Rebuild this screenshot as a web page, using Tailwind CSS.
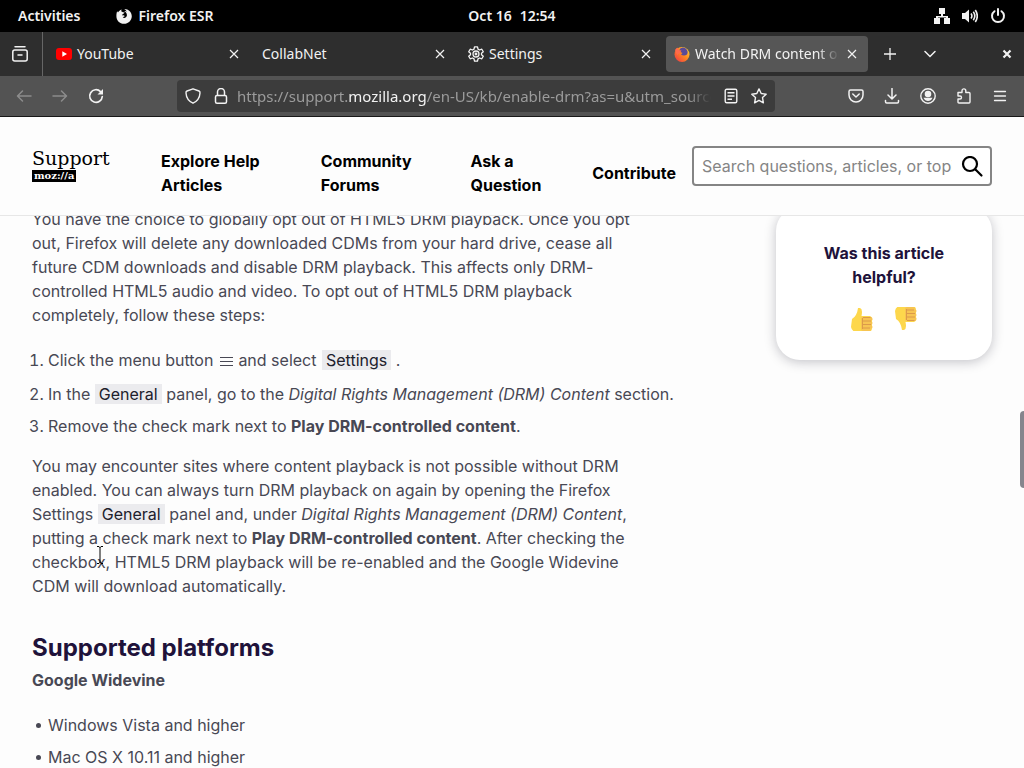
<!DOCTYPE html>
<html lang="en">

<head>
  <meta charset="UTF-8" />
  <meta name="viewport" content="width=device-width, initial-scale=1.0" />
  <title>Watch DRM content on Firefox</title>
  <script src="https://cdn.jsdelivr.net/npm/@tailwindcss/browser@4"></script>
</head>

<body class="h-screen flex flex-col overflow-hidden bg-[#fdfdfd] font-['Noto_Sans',sans-serif] text-[15px]">

  <!-- Desktop bar -->
  <div class="h-8 shrink-0 bg-black text-[#f2f2f2] text-sm font-semibold grid grid-cols-3 items-center px-[18px]">
    <div class="flex items-center gap-9">
      <button>Activities</button>
      <button class="flex items-center gap-1.5">
        <svg class="size-4" viewBox="0 0 16 16" fill="currentColor"><path d="M1.2 3.2 2 4.5C2.8 3 4 2 5.600 1.400L5.200 3.300 7 4.200 8.700 4.500 7.200 5.900 6.300 6.500 6 7.600C7.200 7.100 8.200 7.200 8.900 8.200 8 8 7.600 9.300 6.600 9.300 8 10.500 10.500 9.800 10.900 7.500 11.100 5.500 9.700 3.700 8.400 3.200 9.300 3 10.200 3.200 10.900 3.700 10.300 2.600 9.500 1.800 8.300 1 12 .8 15.700 3.700 15.800 8.200 15.700 12.600 12.200 15.800 8 15.800 3.700 15.700.400 12.500.400 8.200.400 6.200.600 4.600 1.200 3.200z"/></svg>
        Firefox ESR
      </button>
    </div>
    <button class="justify-self-center flex gap-2"><span>Oct 16</span><span>12:54</span></button>
    <button class="justify-self-end flex items-center gap-3" aria-label="System menu">
      <svg class="size-4" viewBox="0 0 16 16" fill="currentColor"><path d="M5 0h6v6H9v2h5v2h2v6h-6v-6h2v-.500H4v.500h2v6H0v-6h2V8h5V6H5z"/></svg>
      <svg class="size-4" viewBox="0 0 16 16" fill="none" stroke="currentColor" stroke-width="1.600"><path d="M0 5h3l4-3.500v13L3 11H0z" fill="currentColor" stroke="none"/><path d="M9 5.500q1.800 2.500 0 5M11.300 3.800q3 4.200 0 8.400M13.300 2q4 6 0 12"/></svg>
      <svg class="size-4" viewBox="0 0 16 16" fill="none" stroke="currentColor" stroke-width="2" stroke-linecap="round"><path d="M8 1v6M4.500 3.200a6 6 0 1 0 7 0"/></svg>
    </button>
  </div>

  <!-- Tab strip -->
  <div class="h-11 shrink-0 bg-[#2e2e2e] text-[#f2f2f2] text-sm flex items-center">
    <button class="w-[43px] h-full border-r border-[#666] flex items-center justify-center pr-0.5" aria-label="Firefox View">
      <svg class="size-4" viewBox="0 0 16 16" fill="none" stroke="currentColor" stroke-width="1.500" stroke-linecap="round"><path d="M3 .8h10M6 9h4"/><rect x=".8" y="4" width="14.400" height="11" rx="2"/></svg>
    </button>
    <div class="flex gap-1 pl-[5px]">
      <div class="w-[202px] h-9 rounded flex items-center gap-[5px] px-2">
        <svg class="size-4" viewBox="0 0 16 16"><rect y="2" width="16" height="12" rx="3" fill="#f00"/><path d="M6.300 5.300v5.400L11 8z" fill="#fff"/></svg>
        <span class="flex-1">YouTube</span>
        <button class="size-4 flex items-center justify-center" aria-label="Close tab"><svg class="size-2.5" viewBox="0 0 10 10" stroke="currentColor" stroke-width="1.200"><path d="m1 1 8 8M9 1 1 9"/></svg></button>
      </div>
      <div class="w-[202px] h-9 rounded flex items-center gap-[5px] px-2">
        <span class="flex-1">CollabNet</span>
        <button class="size-4 flex items-center justify-center" aria-label="Close tab"><svg class="size-2.5" viewBox="0 0 10 10" stroke="currentColor" stroke-width="1.200"><path d="m1 1 8 8M9 1 1 9"/></svg></button>
      </div>
      <div class="w-[202px] h-9 rounded flex items-center gap-[5px] px-2">
        <svg class="size-4" viewBox="0 0 16 16" fill="none" stroke="currentColor" stroke-width="1.300" stroke-linejoin="round"><path d="M6.500.8h3l.5 2.300 1.500.900 2.300-.800 1.500 2.600L13.500 7.300v1.400l1.800 1.500-1.500 2.600-2.300-.800-1.500.900-.500 2.300h-3L6 12.900 4.500 12l-2.300.800-1.500-2.600 1.800-1.500V7.300L.7 5.800l1.500-2.600L4.500 4 6 3.100z"/><circle cx="8" cy="8" r="3"/><circle cx="8" cy="8" r=".8"/></svg>
        <span class="flex-1">Settings</span>
        <button class="size-4 flex items-center justify-center" aria-label="Close tab"><svg class="size-2.5" viewBox="0 0 10 10" stroke="currentColor" stroke-width="1.200"><path d="m1 1 8 8M9 1 1 9"/></svg></button>
      </div>
      <div class="w-[202px] h-9 rounded bg-[#565656] flex items-center gap-[5px] px-2">
        <svg class="size-4 shrink-0" viewBox="0 0 16 16">
          <defs><linearGradient id="fox" x1="1" y1="0" x2="0" y2="1"><stop stop-color="#ffe040"/><stop offset=".45" stop-color="#ff8a20"/><stop offset="1" stop-color="#f0304a"/></linearGradient></defs>
          <circle cx="8" cy="8.500" r="7.500" fill="url(#fox)"/><path d="M5 4.500Q7 0 11 2q4 3 2 6.500-3 2-6 0l1.500-1.500-2-1z" fill="#5a4a98"/><path d="M1 4q2-3 3-2l.5 2 3 .5L6 7 3 9z" fill="#ff6a4c"/>
        </svg>
        <span class="flex-1 whitespace-nowrap overflow-hidden mask-r-from-85%">Watch DRM content on Firefox</span>
        <button class="size-4 flex items-center justify-center shrink-0" aria-label="Close tab"><svg class="size-2.5" viewBox="0 0 10 10" stroke="currentColor" stroke-width="1.200"><path d="m1 1 8 8M9 1 1 9"/></svg></button>
      </div>
    </div>
    <div class="flex-1 flex items-center gap-7 pl-4 pr-3">
      <button aria-label="New tab"><svg class="size-3" viewBox="0 0 12 12" stroke="currentColor" stroke-width="1.300"><path d="M6 0v12M0 6h12"/></svg></button>
      <button aria-label="List all tabs"><svg class="size-3" viewBox="0 0 12 12" fill="none" stroke="currentColor" stroke-width="1.500" stroke-linecap="round"><path d="m1 3.500 5 5 5-5"/></svg></button>
      <button class="ml-auto" aria-label="Close window"><svg class="size-2.5" viewBox="0 0 10 10" stroke="currentColor" stroke-width="2.200"><path d="m1.500 1.500 7 7M8.500 1.500l-7 7"/></svg></button>
    </div>
  </div>

  <!-- Navigation toolbar -->
  <div class="h-[41px] shrink-0 bg-[#535353] border-b border-[#181818] text-[#f2f2f2] flex items-center pl-4 pr-4">
    <div class="flex items-center gap-5 w-[161px]">
      <button class="text-[#8c8c8c]" aria-label="Back"><svg class="size-4" viewBox="0 0 16 16" fill="none" stroke="currentColor" stroke-width="1.500" stroke-linecap="round" stroke-linejoin="round"><path d="M6.500 3 1.500 8l5 5M2 8h13"/></svg></button>
      <button class="text-[#8c8c8c]" aria-label="Forward"><svg class="size-4" viewBox="0 0 16 16" fill="none" stroke="currentColor" stroke-width="1.500" stroke-linecap="round" stroke-linejoin="round"><path d="m9.500 3 5 5-5 5M14 8H1"/></svg></button>
      <button aria-label="Reload"><svg class="size-4" viewBox="0 0 16 16" fill="none" stroke="currentColor" stroke-width="1.700" stroke-linecap="round"><path d="M12.500 3.600A6.300 6.300 0 1 0 14.300 8.500"/><path d="M15 1v5.500H9.500z" fill="currentColor" stroke="none"/></svg></button>
    </div>
    <div class="flex-1 h-8 rounded bg-[#3c3c3c] flex items-center gap-3 px-2">
      <svg class="size-4 shrink-0" viewBox="0 0 16 16" fill="none" stroke="currentColor" stroke-width="1.400" stroke-linejoin="round"><path d="m8 .8 6 2.200q1.200.5 1 2-.4 7.200-7 10.200Q1.400 12.200 1 5q-.2-1.500 1-2z"/></svg>
      <svg class="size-4 shrink-0" viewBox="0 0 16 16" fill="none" stroke="currentColor" stroke-width="1.500"><rect x="2.500" y="7.500" width="11" height="7.700" rx="1.500"/><path d="M4.500 7.500V4a3.500 3.500 0 0 1 7 0v3.500"/></svg>
      <div class="flex-1 w-0 overflow-hidden whitespace-nowrap text-[#9b9b9b] -ml-1 mask-r-from-95%">https://support.<span class="text-[#f2f2f2]">mozilla.org</span>/en-US/kb/enable-drm?as=u&amp;utm_source=inproduct</div>
      <button aria-label="Reader view"><svg class="size-4" viewBox="0 0 16 16" fill="none" stroke="currentColor" stroke-width="1.400"><rect x="2.200" y="1.200" width="11.600" height="13.600" rx="1.500"/><path d="M4.500 4.800h7M4.500 8h7M4.500 11.200H9"/></svg></button>
      <button aria-label="Bookmark"><svg class="size-4" viewBox="0 0 16 16" fill="none" stroke="currentColor" stroke-width="1.400" stroke-linejoin="round"><path d="m8 .9 2.200 4.600 5 .7-3.700 3.400.9 5.200L8 12.300l-4.400 2.500.9-5.200L.8 6.200l5-.7z"/></svg></button>
    </div>
    <div class="flex items-center gap-5 pl-[73px]">
      <button aria-label="Pocket"><svg class="size-4" viewBox="0 0 16 16" fill="none" stroke="currentColor" stroke-width="1.500" stroke-linecap="round" stroke-linejoin="round"><path d="M2.500 2h11q1.500 0 1.500 1.500V7A7 7 0 0 1 1 7V3.500Q1 2 2.500 2z"/><path d="m4.800 6 3.200 3 3.200-3"/></svg></button>
      <button aria-label="Downloads"><svg class="size-4" viewBox="0 0 16 16" fill="none" stroke="currentColor" stroke-width="1.500" stroke-linecap="round" stroke-linejoin="round"><path d="M8 .5v10M4 7l4 4 4-4M1.500 12.500v1.300q0 1.200 1.200 1.200h10.600q1.200 0 1.200-1.200v-1.300"/></svg></button>
      <button aria-label="Account"><svg class="size-4" viewBox="0 0 16 16" fill="none" stroke="currentColor" stroke-width="1.400"><circle cx="8" cy="8" r="7.200"/><circle cx="8" cy="6" r="2.600" fill="currentColor"/><path d="M3.500 9.800h9Q11 13 8 13t-4.500-3.200z" fill="currentColor" stroke="none"/></svg></button>
      <button aria-label="Extensions"><svg class="size-4" viewBox="0 0 16 16" fill="none" stroke="currentColor" stroke-width="1.400" stroke-linejoin="round"><path d="M2 4.500h4V2.800a1.900 1.900 0 0 1 3.800 0v1.700H13q1 0 1 1V14q0 1-1 1H3q-1 0-1-1v-3h2a1.500 1.500 0 0 0 0-3H2z"/></svg></button>
      <button aria-label="Menu"><svg class="size-4" viewBox="0 0 16 16" stroke="currentColor" stroke-width="1.300" stroke-linecap="round"><path d="M2.500 3.500h11M2.500 8h11M2.500 12.500h11"/></svg></button>
    </div>
  </div>

  <!-- Web page -->
  <div class="relative flex-1 min-h-0 overflow-hidden font-['Inter',sans-serif] text-base text-[#484854]">
    <header class="relative z-10 h-[99px] bg-[#fdfdfd] border-b border-[#e7e7e7] flex items-start px-8 pt-[29px]">
      <a href="#" class="w-[129px] shrink-0 text-black font-['DejaVu_Serif',serif]">
        <span class="block text-[19px] leading-6">Support</span>
        <span class="inline-block bg-black text-white text-[10px] leading-3 font-bold px-0.5 align-top">moz://a</span>
      </a>
      <nav class="flex-1 flex items-center justify-between pr-4 pt-[3px] font-bold text-black">
        <a href="#" class="w-[110px]">Explore Help Articles</a>
        <a href="#" class="w-[100px]">Community Forums</a>
        <a href="#" class="w-[72px]">Ask a Question</a>
        <a href="#">Contribute</a>
      </nav>
      <form class="w-[300px] h-10 border-2 border-[#858585] rounded flex items-center pl-2 pr-1.5 bg-white">
        <input type="text" aria-label="Search" placeholder="Search questions, articles, or topics" class="flex-1 min-w-0 outline-none placeholder:text-[#858585]">
        <button type="button" class="ml-2" aria-label="Submit search"><svg class="size-6" viewBox="0 0 24 24" fill="none" stroke="#000" stroke-width="2.200" stroke-linecap="round"><circle cx="10" cy="10" r="7"/><path d="m15.500 15.500 6 6"/></svg></button>
      </form>
    </header>

    <div class="-mt-[9px] flex items-start justify-between px-8">
      <main class="w-[648px]">
        <p class="max-w-[608px]">You have the choice to globally opt out of HTML5 DRM playback. Once you opt out, Firefox will delete any downloaded CDMs from your hard drive, cease all future CDM downloads and disable DRM playback. This affects only DRM-controlled HTML5 audio and video. To opt out of HTML5 DRM playback completely, follow these steps:</p>
        <ol class="mt-[21px] pl-4 list-decimal">
          <li class="pb-2.5">Click the menu button <svg class="inline size-4 align-[-3px]" viewBox="0 0 16 16" stroke="currentColor"><path d="M2 4.500h13M2 8.500h13M2 12.500h13"/></svg> and select <span class="bg-[#ebebee] text-[#20202c] px-1 ml-px">Settings</span> .</li>
          <li class="pb-2 whitespace-nowrap">In the <span class="bg-[#ebebee] text-[#20202c] px-1">General</span> panel, go to the <em>Digital Rights Management (DRM) Content</em> section.</li>
          <li>Remove the check mark next to <strong>Play DRM-controlled content</strong>.</li>
        </ol>
        <p class="mt-4 max-w-[608px]">You may encounter sites where content playback is not possible without DRM enabled. You can always turn DRM playback on again by opening the Firefox Settings <span class="bg-[#ebebee] text-[#20202c] px-1">General</span> panel and, under <em>Digital Rights Management (DRM) Content</em>, putting a check mark next to <strong>Play DRM-controlled content</strong>. After checking the checkbox, HTML5 DRM playback will be re-enabled and the Google Widevine CDM will download automatically.</p>
        <h2 class="mt-[34px] text-2xl font-bold text-[#20123a]">Supported platforms</h2>
        <h3 class="mt-1 font-bold">Google Widevine</h3>
        <ul class="mt-[21px] pl-4 list-none space-y-2">
          <li class="-ml-3 flex gap-[7px] items-center before:size-[5px] before:rounded-full before:bg-[#484854]">Windows Vista and higher</li>
          <li class="-ml-3 flex gap-[7px] items-center before:size-[5px] before:rounded-full before:bg-[#484854]">Mac OS X 10.11 and higher</li>
        </ul>
      </main>

      <aside class="w-[216px] h-[153px] rounded-3xl bg-white shadow-[0_2px_12px_rgba(20,20,40,0.25)] pt-[34px] px-10 text-center font-bold text-[#20123a]">
        <h3>Was this article helpful?</h3>
        <div class="mt-[18px] flex justify-center gap-5">
          <button aria-label="Helpful">
            <svg class="size-6" viewBox="0 0 24 24"><path d="M2 12q5-3 6-11h2q3 1 1.500 8H20q3 1 2 5v7q0 4-4 4H7q-5 0-6-5z" fill="#fdd74c"/><path d="M12.500 10h8q2 0 2 2t-2 2q2 0 2 2t-2 2q2 0 2 2t-2 1.500q1 2.500-1.500 2.500h-6q-2 0-2-2V12q0-2 1.500-2z" fill="#f7c452"/><path d="M13 10.500h7.500M13 14h8M13 17.500h8M13 21h7M12.500 11v11" fill="none" stroke="#dc9a4a"/></svg>
          </button>
          <button aria-label="Not helpful">
            <svg class="size-6 -scale-y-100" viewBox="0 0 24 24"><path d="M2 12q5-3 6-11h2q3 1 1.500 8H20q3 1 2 5v7q0 4-4 4H7q-5 0-6-5z" fill="#fdd74c"/><path d="M12.500 10h8q2 0 2 2t-2 2q2 0 2 2t-2 2q2 0 2 2t-2 1.500q1 2.500-1.500 2.500h-6q-2 0-2-2V12q0-2 1.500-2z" fill="#f7c452"/><path d="M13 10.500h7.500M13 14h8M13 17.500h8M13 21h7M12.500 11v11" fill="none" stroke="#dc9a4a"/></svg>
          </button>
        </div>
      </aside>
    </div>

    <!-- Scrollbar thumb and text cursor -->
    <div class="absolute right-0 top-[294px] w-1 h-[77px] rounded-l bg-[#85858d]"></div>
    <svg class="absolute left-24 top-[429px] w-2 h-[18px]" viewBox="0 0 8 18" fill="none" stroke="#000"><path d="M1 .5h2l1 1 1-1h2M4 1v16M1 17.500h2l1-1 1 1h2"/></svg>
  </div>
</body>

</html>
